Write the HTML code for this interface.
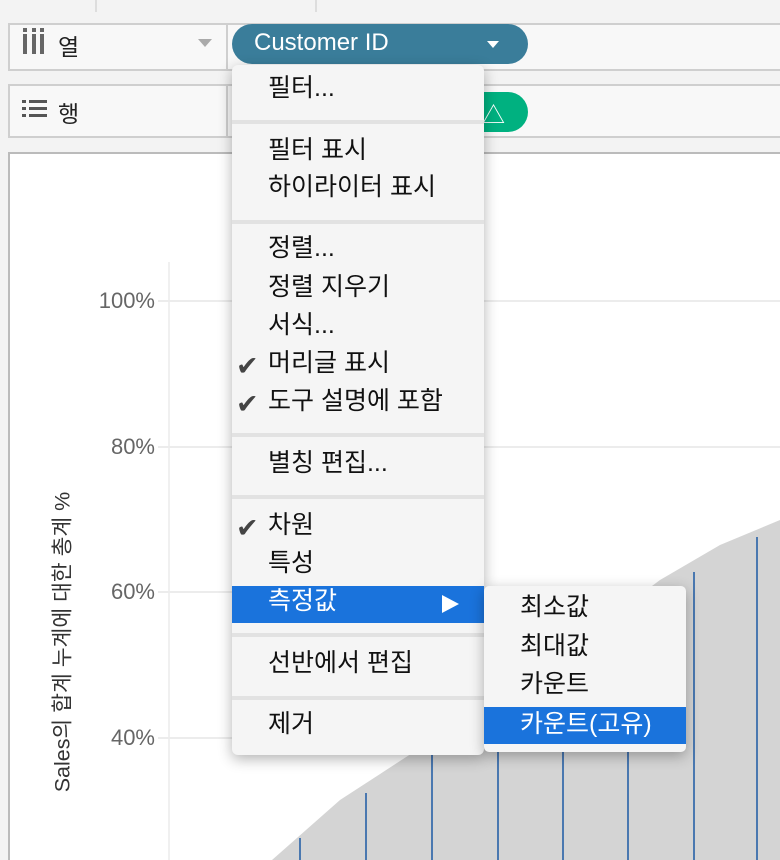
<!DOCTYPE html>
<html style="width:780px;height:860px;overflow:hidden"><head><meta charset="utf-8">
<style>
*{margin:0;padding:0;box-sizing:border-box}
body{width:780px;height:860px;overflow:hidden;background:#f3f3f3;font-family:"Liberation Sans","Noto Sans CJK KR",sans-serif;position:relative}
.a{position:absolute}
.shelf{position:absolute;left:8px;width:772px;background:#f8f8f8;border:2px solid #cfcfcf;border-right:none}
.mi{position:absolute;left:268px;font-size:25px;color:#111;line-height:30px}
.si{position:absolute;left:520px;font-size:25px;color:#111;line-height:30px}
.sep{position:absolute;left:232px;width:252px;height:4px;background:#e2e2e2}
.ck{position:absolute;left:236px;font-size:27px;color:#444;line-height:30px}
.yl{position:absolute;right:625px;font-size:22px;color:#666;line-height:22px}
.gl{position:absolute;left:158px;width:622px;height:2px;background:#ececec}
</style></head><body>
<div class="a" style="left:95px;top:0;width:2px;height:12px;background:#ddd"></div>
<div class="a" style="left:315px;top:0;width:2px;height:12px;background:#ddd"></div>
<div class="shelf" style="top:23px;height:48px"></div>
<div class="a" style="left:226px;top:24px;width:2px;height:46px;background:#cfcfcf"></div>
<div class="shelf" style="top:84px;height:54px"></div>
<div class="a" style="left:226px;top:85px;width:2px;height:52px;background:#cfcfcf"></div>
<div class="a" style="left:23px;top:34px;width:4px;height:20px;background:#666"></div>
<div class="a" style="left:32px;top:34px;width:4px;height:20px;background:#666"></div>
<div class="a" style="left:40px;top:34px;width:4px;height:20px;background:#666"></div>
<div class="a" style="left:23px;top:28px;width:4px;height:4px;background:#666"></div>
<div class="a" style="left:32px;top:28px;width:4px;height:4px;background:#666"></div>
<div class="a" style="left:40px;top:28px;width:4px;height:4px;background:#666"></div>
<div class="a" style="left:58px;top:28px;font-size:23px;color:#222">열</div>
<div class="a" style="left:198px;top:39px;border-left:7px solid transparent;border-right:7px solid transparent;border-top:8px solid #aaa"></div>
<svg class="a" style="left:22px;top:98px" width="26" height="22"><g fill="#555"><rect x="0" y="2" width="4" height="3"/><rect x="7" y="2" width="18" height="3"/><rect x="0" y="9" width="4" height="3"/><rect x="7" y="9" width="18" height="3"/><rect x="0" y="16" width="4" height="3"/><rect x="7" y="16" width="18" height="3"/></g></svg>
<div class="a" style="left:58px;top:95px;font-size:23px;color:#222">행</div>
<div class="a" style="left:232px;top:24px;width:296px;height:40px;border-radius:20px;background:#3a7d9a"></div>
<div class="a" style="left:254px;top:29px;font-size:24px;color:#fff">Customer ID</div>
<div class="a" style="left:487px;top:41px;border-left:6px solid transparent;border-right:6px solid transparent;border-top:7px solid #fff"></div>
<div class="a" style="left:240px;top:92px;width:288px;height:40px;border-radius:20px;background:#00b180"></div>
<div class="a" style="left:482px;top:96px;font-size:23px;color:#fff">△</div>
<div class="a" style="left:8px;top:152px;width:772px;height:708px;background:#fff;border:2px solid #bbb;border-right:none;border-bottom:none"></div>
<div class="a" style="left:168px;top:262px;width:2px;height:598px;background:#f0f0f0"></div>
<div class="gl" style="top:300px"></div>
<div class="gl" style="top:446px"></div>
<div class="gl" style="top:591px"></div>
<div class="gl" style="top:737px"></div>
<div class="yl" style="top:290px">100%</div>
<div class="yl" style="top:436px">80%</div>
<div class="yl" style="top:581px">60%</div>
<div class="yl" style="top:727px">40%</div>
<div class="a" style="left:61px;top:642px;transform:translate(-50%,-50%) rotate(-90deg);white-space:nowrap;font-size:21.5px;color:#333">Sales의 합계 누계에 대한 총계 %</div>
<svg class="a" style="left:0;top:0" width="780" height="860">
<path d="M272,860 L340,800 L420,748 L500,700 L580,640 L660,580 L720,545 L780,520 L780,860 Z" fill="#d4d4d4"/>
<g stroke="#4a78b0" stroke-width="2">
<line x1="300" y1="838" x2="300" y2="860"/><line x1="366" y1="793" x2="366" y2="860"/>
<line x1="432" y1="742" x2="432" y2="860"/><line x1="498" y1="702" x2="498" y2="860"/>
<line x1="563" y1="655" x2="563" y2="860"/><line x1="628" y1="605" x2="628" y2="860"/>
<line x1="694" y1="572" x2="694" y2="860"/><line x1="757" y1="537" x2="757" y2="860"/>
</g></svg>
<div class="a" style="left:232px;top:65px;width:252px;height:690px;background:#f5f5f5;border-radius:6px;box-shadow:0 4px 14px rgba(0,0,0,.3)"></div>
<div class="sep" style="top:120px"></div>
<div class="sep" style="top:220px"></div>
<div class="sep" style="top:433px"></div>
<div class="sep" style="top:495px"></div>
<div class="sep" style="top:633px"></div>
<div class="sep" style="top:696px"></div>
<div class="a" style="left:232px;top:586px;width:252px;height:37px;background:#1a73dc"></div>
<div class="mi" style="top:73px">필터...</div>
<div class="mi" style="top:135px">필터 표시</div>
<div class="mi" style="top:172px">하이라이터 표시</div>
<div class="mi" style="top:233px">정렬...</div>
<div class="mi" style="top:272px">정렬 지우기</div>
<div class="mi" style="top:310px">서식...</div>
<div class="mi" style="top:348px">머리글 표시</div>
<div class="mi" style="top:386px">도구 설명에 포함</div>
<div class="mi" style="top:448px">별칭 편집...</div>
<div class="mi" style="top:510px">차원</div>
<div class="mi" style="top:548px">특성</div>
<div class="mi" style="top:586px;color:#fff">측정값</div>
<div class="a" style="left:442px;top:595px;border-top:9px solid transparent;border-bottom:9px solid transparent;border-left:17px solid #fff"></div>
<div class="mi" style="top:648px">선반에서 편집</div>
<div class="mi" style="top:709px">제거</div>
<div class="ck" style="top:351px">✔</div>
<div class="ck" style="top:389px">✔</div>
<div class="ck" style="top:513px">✔</div>
<div class="a" style="left:484px;top:586px;width:202px;height:166px;background:#f5f5f5;border-radius:5px;box-shadow:0 4px 14px rgba(0,0,0,.3)"></div>
<div class="a" style="left:484px;top:707px;width:202px;height:37px;background:#1a73dc"></div>
<div class="si" style="top:592px">최소값</div>
<div class="si" style="top:631px">최대값</div>
<div class="si" style="top:669px">카운트</div>
<div class="si" style="top:709px;color:#fff">카운트(고유)</div>
</body></html>
